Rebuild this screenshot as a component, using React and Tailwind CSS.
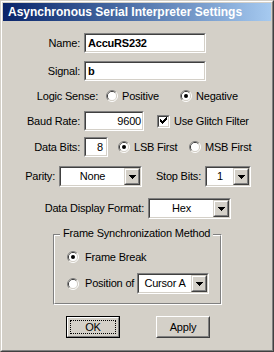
import React from "react";

const FONT = { fontFamily: '"Liberation Sans", Arial, sans-serif' };

function Sunken({ className = "", innerClassName = "", children }) {
  return (
    <div className={"border border-t-[#808080] border-l-[#808080] border-r-white border-b-white shrink-0 " + className}>
      <div className={"h-full w-full border border-t-[#404040] border-l-[#404040] border-r-[#D4D0C8] border-b-[#D4D0C8] bg-white flex items-center " + innerClassName}>
        {children}
      </div>
    </div>
  );
}

function Raised({ className = "", children }) {
  return (
    <div className={"border border-t-[#D4D0C8] border-l-[#D4D0C8] border-r-[#404040] border-b-[#404040] shrink-0 " + className}>
      <div className="h-full w-full border border-t-white border-l-white border-r-[#808080] border-b-[#808080] bg-[#D4D0C8] flex items-center justify-center">
        {children}
      </div>
    </div>
  );
}

function Arrow() {
  return (
    <svg width="7" height="4" viewBox="0 0 7 4" shapeRendering="crispEdges">
      <rect x="0" y="0" width="7" height="1" fill="black" />
      <rect x="1" y="1" width="5" height="1" fill="black" />
      <rect x="2" y="2" width="3" height="1" fill="black" />
      <rect x="3" y="3" width="1" height="1" fill="black" />
    </svg>
  );
}

const T = "text-[11px] leading-none text-black whitespace-nowrap tracking-[-0.2px]";

function Combo({ className = "", value }) {
  return (
    <Sunken className={className} innerClassName="items-stretch">
      <div className={"flex-1 flex items-center justify-center " + T}>{value}</div>
      <Raised className="w-[16px]">
        <Arrow />
      </Raised>
    </Sunken>
  );
}

function Radio({ checked }) {
  return (
    <svg width="12" height="12" viewBox="0 0 12 12" className="shrink-0">
      <path d="M2.11 9.89 A5.5 5.5 0 0 1 9.89 2.11" stroke="#808080" fill="none" />
      <path d="M9.89 2.11 A5.5 5.5 0 0 1 2.11 9.89" stroke="#FFFFFF" fill="none" />
      <path d="M2.82 9.18 A4.5 4.5 0 0 1 9.18 2.82" stroke="#404040" fill="none" />
      <path d="M9.18 2.82 A4.5 4.5 0 0 1 2.82 9.18" stroke="#D4D0C8" fill="none" />
      <circle cx="6" cy="6" r="4" fill="white" />
      {checked && <circle cx="6" cy="6" r="2" fill="black" />}
    </svg>
  );
}

function Checkbox() {
  const tops = [2, 3, 4, 3, 2, 1, 0];
  return (
    <div className="w-[13px] h-[13px] border border-t-[#808080] border-l-[#808080] border-r-white border-b-white shrink-0">
      <div className="h-full w-full border border-t-[#404040] border-l-[#404040] border-r-[#D4D0C8] border-b-[#D4D0C8] bg-white">
        <svg width="9" height="9" viewBox="0 0 9 9" shapeRendering="crispEdges" className="block">
          {tops.map((t, i) => (
            <rect key={i} x={i + 1} y={t} width="1" height="3" fill="black" />
          ))}
        </svg>
      </div>
    </div>
  );
}

export default function App() {
  return (
    <div style={FONT} className="w-[274px] h-[352px] bg-[#D4D0C8] border border-t-[#D4D0C8] border-l-[#D4D0C8] border-r-[#404040] border-b-[#404040]">
      <div className="h-full border border-t-white border-l-white border-r-[#808080] border-b-[#808080] p-[1px] flex flex-col">
        {/* Title bar */}
        <div className="h-[18px] shrink-0 bg-gradient-to-r from-[#0A246A] to-[#A6CAF0] flex items-center pl-[5px]">
          <span className="text-[12px] font-bold text-white leading-none whitespace-nowrap">
            Asynchronous Serial Interpreter Settings
          </span>
        </div>

        {/* Name */}
        <div className="mt-[12px] h-[20px] flex items-center">
          <div className={"w-[77px] text-right " + T}>Name:</div>
          <Sunken className="ml-[4px] w-[122px] h-[20px]" innerClassName="pl-[2px]">
            <span className={T + " font-bold"}>AccuRS232</span>
          </Sunken>
        </div>

        {/* Signal */}
        <div className="mt-[8px] h-[20px] flex items-center">
          <div className={"w-[77px] text-right " + T}>Signal:</div>
          <Sunken className="ml-[4px] w-[122px] h-[20px]" innerClassName="pl-[2px]">
            <span className={T + " font-bold"}>b</span>
          </Sunken>
        </div>

        {/* Logic sense */}
        <div className="mt-[7px] h-[16px] flex items-center">
          <div className={"w-[95px] text-right " + T}>Logic Sense:</div>
          <div className="ml-[8px]"><Radio /></div>
          <div className={"ml-[4px] w-[58px] " + T}>Positive</div>
          <Radio checked />
          <div className={"ml-[4px] " + T}>Negative</div>
        </div>

        {/* Baud rate */}
        <div className="mt-[7px] h-[20px] flex items-center">
          <div className={"w-[77px] text-right " + T}>Baud Rate:</div>
          <Sunken className="ml-[4px] w-[60px] h-[20px]" innerClassName="justify-end pr-[1px]">
            <span className={T}>9600</span>
          </Sunken>
          <div className="ml-[13px]"><Checkbox /></div>
          <div className={"ml-[4px] " + T}>Use Glitch Filter</div>
        </div>

        {/* Data bits */}
        <div className="mt-[6px] h-[20px] flex items-center">
          <div className={"w-[77px] text-right " + T}>Data Bits:</div>
          <Sunken className="ml-[4px] w-[24px] h-[20px]" innerClassName="justify-end pr-[3px]">
            <span className={T}>8</span>
          </Sunken>
          <div className="ml-[10px]"><Radio checked /></div>
          <div className={"ml-[4px] w-[55px] " + T}>LSB First</div>
          <Radio />
          <div className={"ml-[4px] " + T}>MSB First</div>
        </div>

        {/* Parity / Stop bits */}
        <div className="mt-[9px] h-[21px] flex items-center">
          <div className={"w-[52px] text-right " + T}>Parity:</div>
          <Combo className="ml-[4px] w-[83px] h-[21px]" value="None" />
          <div className={"w-[59px] text-right " + T}>Stop Bits:</div>
          <Combo className="ml-[4px] w-[46px] h-[21px]" value="1" />
        </div>

        {/* Data display format */}
        <div className="mt-[11px] h-[21px] flex items-center">
          <div className={"w-[141px] text-right " + T}>Data Display Format:</div>
          <Combo className="ml-[4px] w-[83px] h-[21px]" value="Hex" />
        </div>

        {/* Group box */}
        <div className="mt-[15px] ml-[50px] w-[169px] h-[71px] relative border border-t-[#808080] border-l-[#808080] border-r-white border-b-white">
          <span className={"absolute left-[6px] top-[-8px] px-[3px] bg-[#D4D0C8] leading-[13px] text-[11px] tracking-[-0.2px] text-black whitespace-nowrap"}>
            Frame Synchronization Method
          </span>
          <div className="h-full w-full border border-t-white border-l-white border-r-[#808080] border-b-[#808080] flex flex-col">
            <div className="mt-[13px] h-[16px] pl-[12px] flex items-center">
              <Radio checked />
              <div className={"ml-[6px] " + T}>Frame Break</div>
            </div>
            <div className="mt-[8px] h-[21px] pl-[12px] flex items-center">
              <Radio />
              <div className={"ml-[6px] w-[52px] " + T}>Position of</div>
              <Combo className="w-[72px] h-[21px]" value="Cursor A" />
            </div>
          </div>
        </div>

        {/* Buttons */}
        <div className="mt-[11px] h-[22px] flex items-center">
          <div className="ml-[63px] w-[54px] h-[22px] border border-black">
            <div className="h-full w-full border border-t-white border-l-white border-r-[#808080] border-b-[#808080] p-[2px] flex">
              <div className="flex-1 border border-dotted border-black flex items-center justify-center">
                <span className={T}>OK</span>
              </div>
            </div>
          </div>
          <div className="ml-[36px] w-[54px] h-[22px] border border-t-white border-l-white border-r-[#404040] border-b-[#404040]">
            <div className="h-full w-full border border-t-[#D4D0C8] border-l-[#D4D0C8] border-r-[#808080] border-b-[#808080] flex items-center justify-center">
              <span className={T}>Apply</span>
            </div>
          </div>
        </div>
      </div>
    </div>
  );
}
